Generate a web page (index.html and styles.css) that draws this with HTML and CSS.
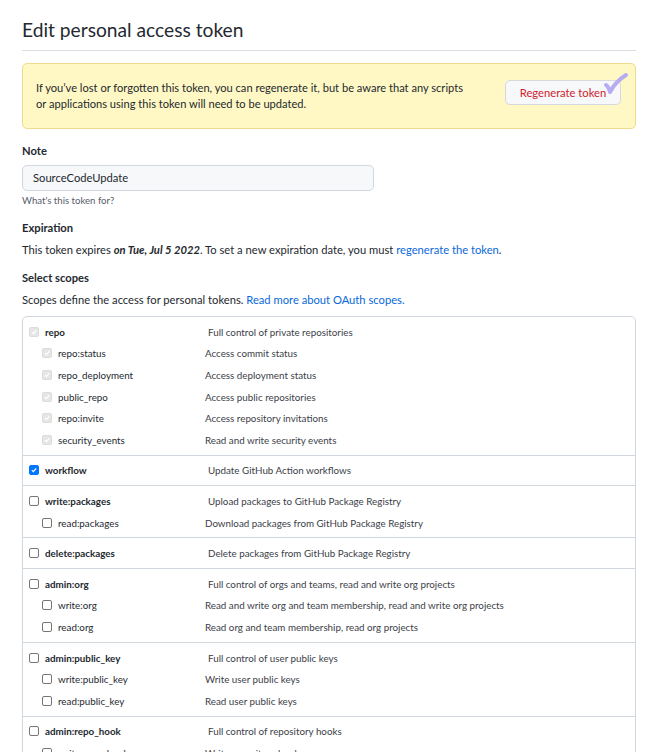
FILE: index.html
```html
<!DOCTYPE html>
<html>
<head>
<meta charset="utf-8">
<link rel="stylesheet" href="styles.css">
</head>
<body>
<main class="page">
  <h1 class="title">Edit personal access token</h1>

  <div class="flash">
    <p class="flash-text">If you’ve lost or forgotten this token, you can regenerate it, but be aware that any scripts or applications using this token will need to be updated.</p>
    <button class="btn-danger">Regenerate token</button>
    <svg class="mark" width="26" height="26" viewBox="0 0 26 26"><path d="M3 13 C5 14 6 17 7 20 C10 14 15 8 23 3" fill="none" stroke="#b5acf2" stroke-width="4" stroke-linecap="round" stroke-linejoin="round"/></svg>
  </div>

  <section class="field">
    <div class="label">Note</div>
    <div class="input">SourceCodeUpdate</div>
    <div class="note">What's this token for?</div>
  </section>

  <section class="field">
    <div class="label">Expiration</div>
    <p class="text">This token expires <em class="strong">on Tue, Jul 5 2022</em>. To set a new expiration date, you must <a class="link">regenerate the token</a>.</p>
  </section>

  <section class="field">
    <div class="label">Select scopes</div>
    <p class="text">Scopes define the access for personal tokens. <a class="link">Read more about OAuth scopes.</a></p>
  </section>

  <div class="scopes">
    <div class="group">
      <div class="row top"><span class="cb dis"><svg viewBox="0 0 10 10"><path d="M2.3 5.2 L4.2 7.1 L7.8 2.9" /></svg></span><span class="name">repo</span><span class="desc">Full control of private repositories</span></div>
      <div class="row sub"><span class="cb dis"><svg viewBox="0 0 10 10"><path d="M2.3 5.2 L4.2 7.1 L7.8 2.9" /></svg></span><span class="name">repo:status</span><span class="desc">Access commit status</span></div>
      <div class="row sub"><span class="cb dis"><svg viewBox="0 0 10 10"><path d="M2.3 5.2 L4.2 7.1 L7.8 2.9" /></svg></span><span class="name">repo_deployment</span><span class="desc">Access deployment status</span></div>
      <div class="row sub"><span class="cb dis"><svg viewBox="0 0 10 10"><path d="M2.3 5.2 L4.2 7.1 L7.8 2.9" /></svg></span><span class="name">public_repo</span><span class="desc">Access public repositories</span></div>
      <div class="row sub"><span class="cb dis"><svg viewBox="0 0 10 10"><path d="M2.3 5.2 L4.2 7.1 L7.8 2.9" /></svg></span><span class="name">repo:invite</span><span class="desc">Access repository invitations</span></div>
      <div class="row sub"><span class="cb dis"><svg viewBox="0 0 10 10"><path d="M2.3 5.2 L4.2 7.1 L7.8 2.9" /></svg></span><span class="name">security_events</span><span class="desc">Read and write security events</span></div>
    </div>
    <div class="group">
      <div class="row top"><span class="cb on"><svg viewBox="0 0 10 10"><path d="M2.3 5.2 L4.2 7.1 L7.8 2.9" /></svg></span><span class="name">workflow</span><span class="desc">Update GitHub Action workflows</span></div>
    </div>
    <div class="group">
      <div class="row top"><span class="cb"></span><span class="name">write:packages</span><span class="desc">Upload packages to GitHub Package Registry</span></div>
      <div class="row sub"><span class="cb"></span><span class="name">read:packages</span><span class="desc">Download packages from GitHub Package Registry</span></div>
    </div>
    <div class="group">
      <div class="row top"><span class="cb"></span><span class="name">delete:packages</span><span class="desc">Delete packages from GitHub Package Registry</span></div>
    </div>
    <div class="group">
      <div class="row top"><span class="cb"></span><span class="name">admin:org</span><span class="desc">Full control of orgs and teams, read and write org projects</span></div>
      <div class="row sub"><span class="cb"></span><span class="name">write:org</span><span class="desc">Read and write org and team membership, read and write org projects</span></div>
      <div class="row sub"><span class="cb"></span><span class="name">read:org</span><span class="desc">Read org and team membership, read org projects</span></div>
    </div>
    <div class="group">
      <div class="row top"><span class="cb"></span><span class="name">admin:public_key</span><span class="desc">Full control of user public keys</span></div>
      <div class="row sub"><span class="cb"></span><span class="name">write:public_key</span><span class="desc">Write user public keys</span></div>
      <div class="row sub"><span class="cb"></span><span class="name">read:public_key</span><span class="desc">Read user public keys</span></div>
    </div>
    <div class="group">
      <div class="row top"><span class="cb"></span><span class="name">admin:repo_hook</span><span class="desc">Full control of repository hooks</span></div>
      <div class="row sub"><span class="cb"></span><span class="name">write:repo_hook</span><span class="desc">Write repository hooks</span></div>
      <div class="row sub"><span class="cb"></span><span class="name">read:repo_hook</span><span class="desc">Read repository hooks</span></div>
    </div>
  </div>
</main>
</body>
</html>
```

FILE: styles.css
```css
html, body {
  margin: 0;
  padding: 0;
  background: #ffffff;
}

body {
  font-family: Lato, "Open Sans", "Liberation Sans", sans-serif;
  font-size: 11.2px;
  color: #24292f;
}

.page {
  width: 614px;
  margin-left: 22px;
  padding-top: 16px;
}

.title {
  margin: 0;
  font-size: 19.2px;
  font-weight: 400;
  line-height: 28px;
  padding-bottom: 6px;
  border-bottom: 1px solid #d8dee4;
}

.flash {
  position: relative;
  margin-top: 12px;
  display: flex;
  align-items: flex-start;
  justify-content: space-between;
  padding: 16px 14px 16px 13px;
  background: #fff8c5;
  border: 1px solid #eedc8c;
  border-radius: 5px;
}

.flash-text {
  margin: 0;
  width: 438px;
  line-height: 16px;
  font-size: 11.1px;
}

.btn-danger {
  font-family: inherit;
  font-size: 11.2px;
  color: #cf222e;
  background: #f6f8fa;
  border: 1px solid #d5d9de;
  border-radius: 5px;
  height: 25px;
  width: 116px;
  padding: 0;
}

.mark {
  position: absolute;
  right: 6px;
  top: 8px;
}

.field {
  margin-top: 12px;
}

.field:first-of-type {
  margin-top: 14px;
}

.label {
  font-weight: 700;
  line-height: 16px;
}

.input {
  margin-top: 6px;
  width: 340px;
  height: 24px;
  line-height: 24px;
  padding: 0 0 0 10px;
  background: #f6f8fa;
  border: 1px solid #d0d7de;
  border-radius: 5px;
}

.note {
  margin-top: 3px;
  font-size: 9.6px;
  color: #57606a;
  line-height: 14px;
}

.text {
  margin: 6px 0 0;
  line-height: 16px;
}

.strong {
  font-weight: 700;
}

.link {
  color: #0969da;
  text-decoration: none;
}

.scopes {
  margin-top: 8px;
  border: 1px solid #d0d7de;
  border-radius: 5px;
  font-size: 9.8px;
}

.group {
  padding: 4px 0 4px;
  border-top: 1px solid #d0d7de;
}

.group:first-child {
  border-top: 0;
}

.row {
  display: flex;
  align-items: center;
  height: 21.6px;
}

.row.top {
  padding-left: 6px;
}

.row.sub {
  padding-left: 19px;
}

.cb {
  box-sizing: border-box;
  width: 10px;
  height: 10px;
  flex: none;
  margin-right: 6px;
  border: 1px solid #767676;
  border-radius: 2px;
  background: #fff;
  display: inline-flex;
}

.cb svg {
  width: 100%;
  height: 100%;
}

.cb svg path {
  fill: none;
  stroke: #fff;
  stroke-width: 1.6;
}

.cb.dis {
  border-color: #dcdcdc;
  background: #e6e6e6;
}

.cb.on {
  border-color: #0075ff;
  background: #0075ff;
}

.name {
  flex: none;
}

.top .name {
  width: 163px;
  font-weight: 700;
}

.sub .name {
  width: 147px;
}

.desc {
  color: #3b4148;
}
```
